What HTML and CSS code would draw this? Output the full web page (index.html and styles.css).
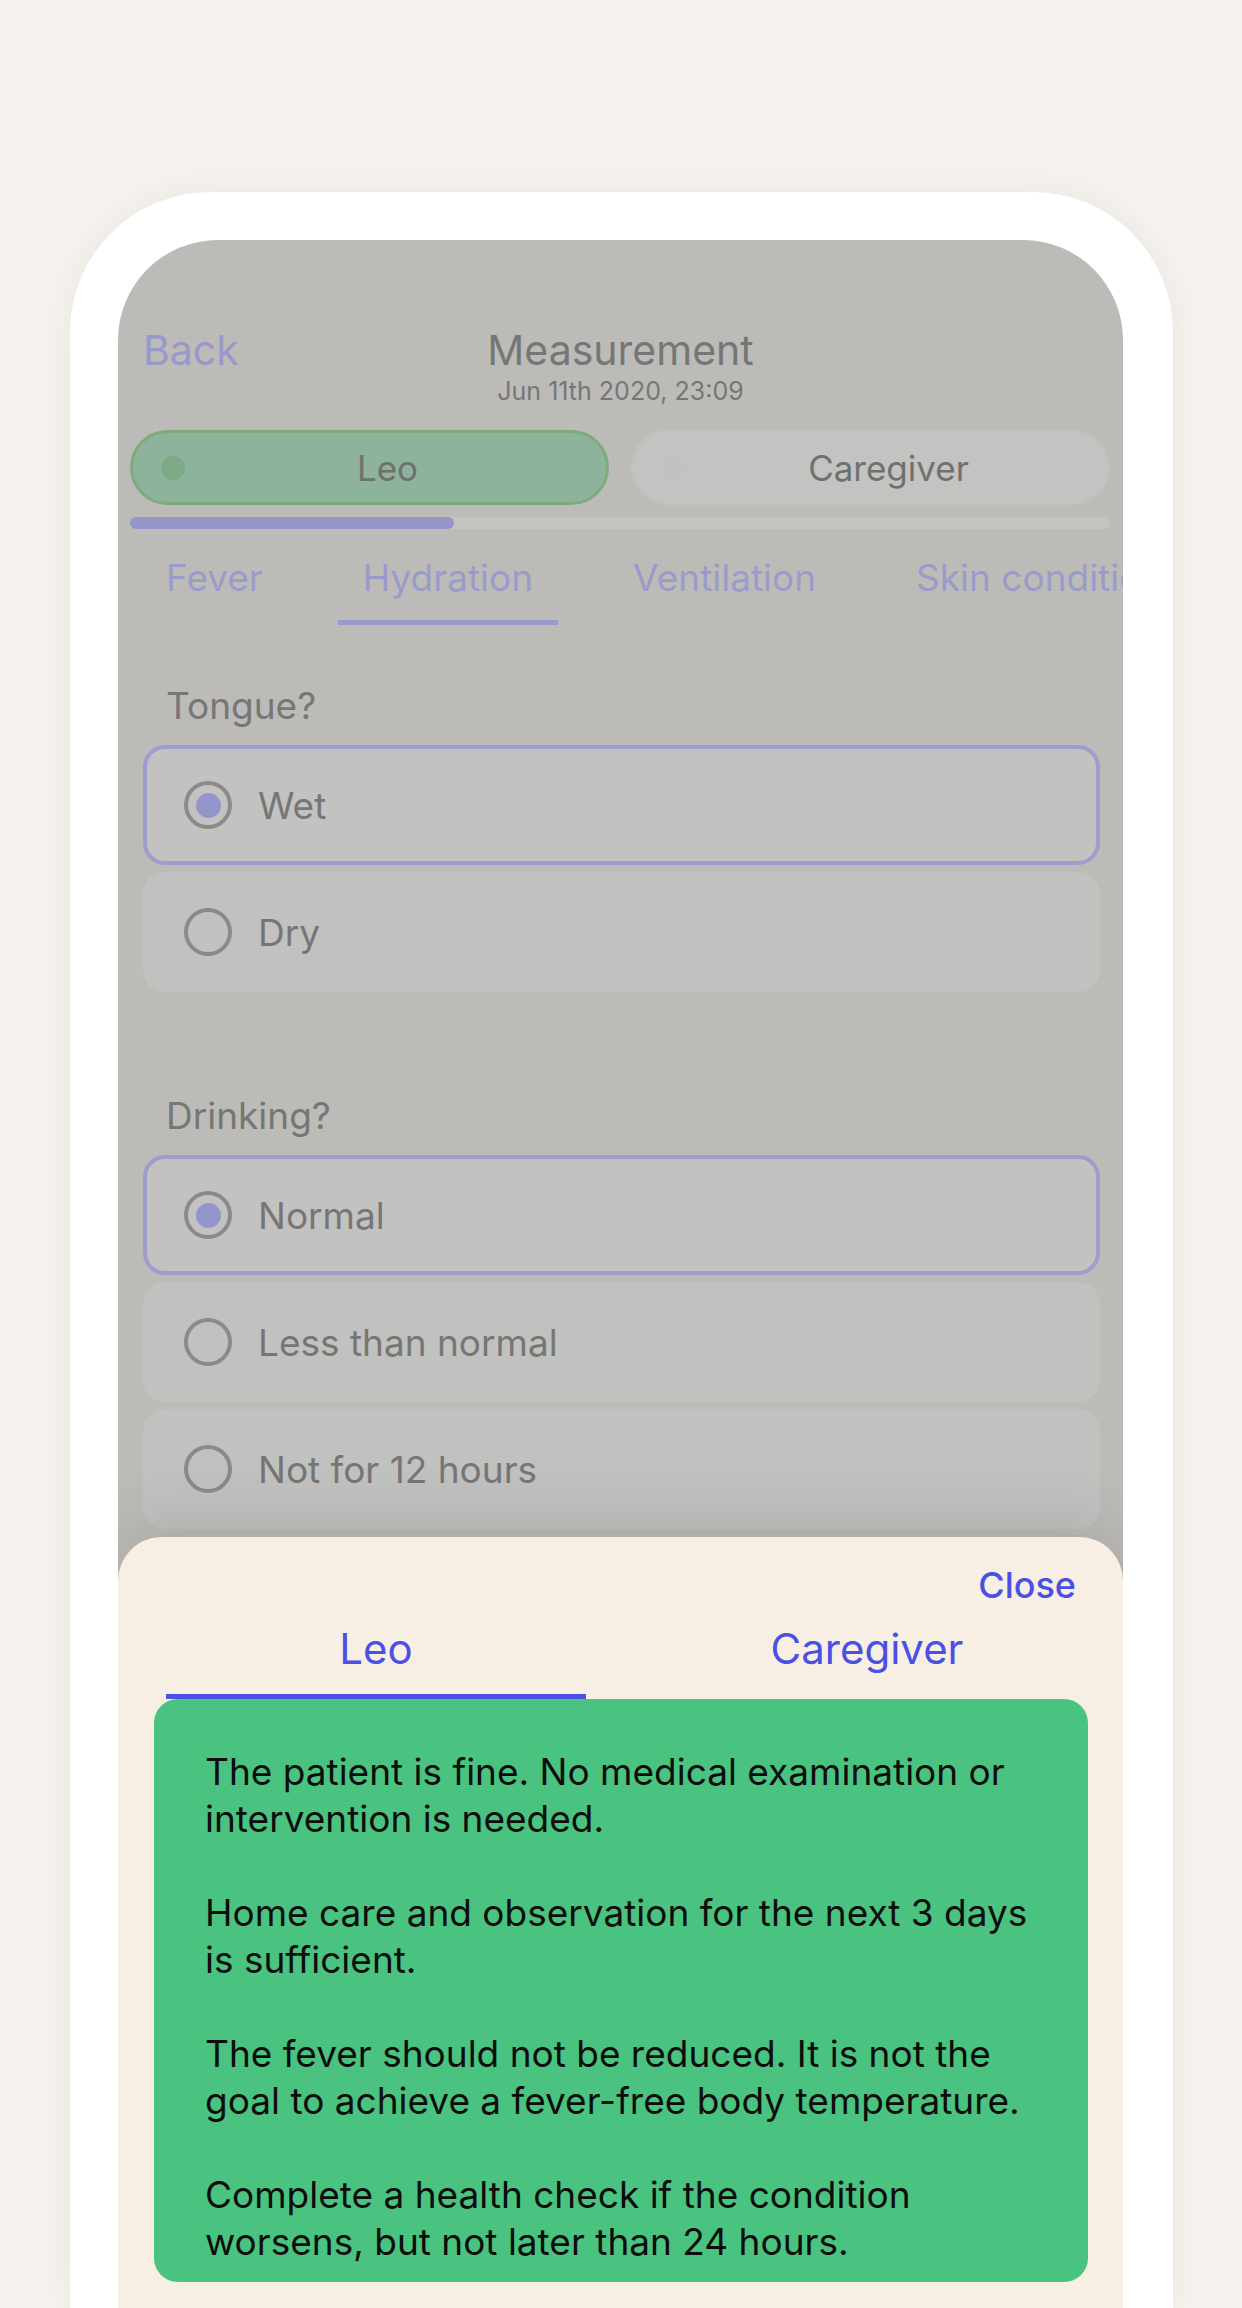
FILE: index.html
```html
<!DOCTYPE html>
<html lang="en">
<head>
<meta charset="utf-8">
<title>Measurement</title>
<link rel="stylesheet" href="styles.css">
</head>
<body>
<div class="stage">
  <div class="phone">
    <div class="screen">
      <header class="nav">
        <span class="nav-back">Back</span>
        <div class="nav-title">
          <div class="nav-heading">Measurement</div>
          <div class="nav-date">Jun 11th 2020, 23:09</div>
        </div>
        <span class="nav-spacer"></span>
      </header>

      <div class="people">
        <div class="person person-active"><span class="person-dot"></span><span class="person-name">Leo</span></div>
        <div class="person"><span class="person-dot person-dot-ghost"></span><span class="person-name">Caregiver</span></div>
      </div>
      <div class="progress"><div class="progress-fill" style="width: 324px"></div></div>

      <nav class="categories">
        <span class="category">Fever</span>
        <span class="category category-active">Hydration</span>
        <span class="category">Ventilation</span>
        <span class="category">Skin condition</span>
      </nav>

      <section class="question">
        <div class="question-label">Tongue?</div>
        <div class="option option-selected"><span class="radio radio-on"></span><span>Wet</span></div>
        <div class="option"><span class="radio"></span><span>Dry</span></div>
      </section>

      <section class="question question-second">
        <div class="question-label">Drinking?</div>
        <div class="option option-selected"><span class="radio radio-on"></span><span>Normal</span></div>
        <div class="option"><span class="radio"></span><span>Less than normal</span></div>
        <div class="option"><span class="radio"></span><span>Not for 12 hours</span></div>
      </section>

      <div class="sheet">
        <div class="sheet-top"><span class="sheet-close">Close</span></div>
        <div class="sheet-tabs">
          <span class="sheet-tab sheet-tab-active">Leo</span>
          <span class="sheet-tab">Caregiver</span>
        </div>
        <div class="advice">
          <p>The patient is fine. No medical examination or intervention is needed.</p>
          <p>Home care and observation for the next 3 days is sufficient.</p>
          <p>The fever should not be reduced. It is not the goal to achieve a fever-free body temperature.</p>
          <p>Complete a health check if the condition worsens, but not later than 24 hours.</p>
        </div>
      </div>
    </div>
  </div>
</div>
</body>
</html>
```

FILE: styles.css
```css
* { box-sizing: border-box; }

html, body {
  margin: 0;
  padding: 0;
}

body {
  width: 1242px;
  height: 2308px;
  overflow: hidden;
  background: #f6f3ee;
  font-family: Inter, "Noto Sans", "Liberation Sans", sans-serif;
  color: #111;
}

.stage {
  padding: 192px 69px 0 70px;
}

/* white device frame */
.phone {
  width: 1103px;
  height: 2116px;
  background: #ffffff;
  border-radius: 140px 140px 0 0;
  padding: 48px 50px 0 48px;
  box-shadow: 0 0 36px rgba(120, 110, 95, 0.10);
}

/* dimmed app screen behind the sheet */
.screen {
  position: relative;
  width: 1005px;
  height: 2068px;
  background: #bcbbb7;
  border-radius: 100px 100px 0 0;
  overflow: hidden;
}

/* navigation bar */
.nav {
  display: grid;
  grid-template-columns: 1fr auto 1fr;
  align-items: start;
  padding: 86px 25px 0 25px;
}

.nav-back {
  font-size: 41px;
  line-height: 48px;
  color: #9899cb;
}

.nav-title {
  text-align: center;
}

.nav-heading {
  font-size: 41px;
  line-height: 48px;
  color: #767676;
}

.nav-date {
  margin-top: 2px;
  font-size: 25px;
  line-height: 30px;
  color: #767676;
}

/* person switcher */
.people {
  display: flex;
  gap: 22px;
  margin: 24px 13px 0 12px;
}

.person {
  flex: 1;
  height: 75px;
  display: flex;
  align-items: center;
  padding: 0 16px 0 28px;
  border-radius: 38px;
  background: #c3c3c1;
  border: 3px solid #c1c1bf;
}

.person-active {
  background: #8db39c;
  border-color: #7eab7d;
}

.person-dot {
  width: 24px;
  height: 24px;
  border-radius: 50%;
  background: #7ea987;
  flex: none;
}

.person-dot-ghost {
  background: #c1c1bf;
}

.person-name {
  flex: 1;
  text-align: center;
  font-size: 35px;
  color: #6f716f;
}

.progress {
  margin: 12px 13px 0 12px;
  height: 12px;
  border-radius: 6px;
  background: #c3c3c1;
}

.progress-fill {
  height: 12px;
  border-radius: 6px;
  background: #9497c7;
}

/* category tabs */
.categories {
  display: flex;
  gap: 50px;
  padding-left: 23px;
  margin-top: 26px;
  white-space: nowrap;
}

.category {
  padding: 0 25px 19px;
  font-size: 37px;
  line-height: 46px;
  color: #9b9bcb;
  border-bottom: 5px solid transparent;
}

.category-active {
  border-bottom-color: #9b9bcb;
}

/* questions */
.question {
  margin: 58px 23px 0 25px;
}

.question-second {
  margin-top: 101px;
}

.question-label {
  padding-left: 23px;
  margin-bottom: 16px;
  font-size: 37px;
  line-height: 46px;
  color: #767676;
}

.option {
  display: flex;
  align-items: center;
  gap: 26px;
  height: 120px;
  padding-left: 37px;
  margin-bottom: 7px;
  border-radius: 22px;
  border: 4px solid transparent;
  background: #c1c1c0;
  font-size: 37px;
  color: #767676;
}

.option-selected {
  border-color: #9e9dd0;
  background: #c2c2c1;
}

.radio {
  width: 48px;
  height: 48px;
  border-radius: 50%;
  border: 4px solid #8a8a8a;
  flex: none;
  display: flex;
  align-items: center;
  justify-content: center;
}

.radio-on::after {
  content: "";
  width: 25px;
  height: 25px;
  border-radius: 50%;
  background: #9496cb;
}

/* bottom sheet with the advice */
.sheet {
  position: absolute;
  left: 0;
  right: 0;
  top: 1297px;
  bottom: 0;
  background: #f7efe4;
  border-radius: 44px 44px 0 0;
  box-shadow: 0 -14px 60px rgba(70, 70, 60, 0.16);
}

.sheet-top {
  display: flex;
  justify-content: flex-end;
  padding: 26px 47px 0 0;
}

.sheet-close {
  font-size: 36px;
  line-height: 44px;
  font-weight: 500;
  color: #4a50e3;
}

.sheet-tabs {
  display: flex;
  justify-content: space-between;
  margin: 16px 46px 0 48px;
}

.sheet-tab {
  width: 420px;
  text-align: center;
  padding-bottom: 20px;
  font-size: 42px;
  line-height: 51px;
  color: #4a50e3;
  border-bottom: 5px solid transparent;
}

.sheet-tab-active {
  border-bottom-color: #4a50e3;
}

.advice {
  margin: 0 35px 0 36px;
  padding: 49px 40px 17px 51px;
  background: #49c37f;
  border-radius: 24px;
  font-size: 37px;
  line-height: 47px;
  color: #0d0d0d;
}

.advice p {
  margin: 0 0 47px;
}

.advice p:last-child {
  margin-bottom: 0;
}
```
